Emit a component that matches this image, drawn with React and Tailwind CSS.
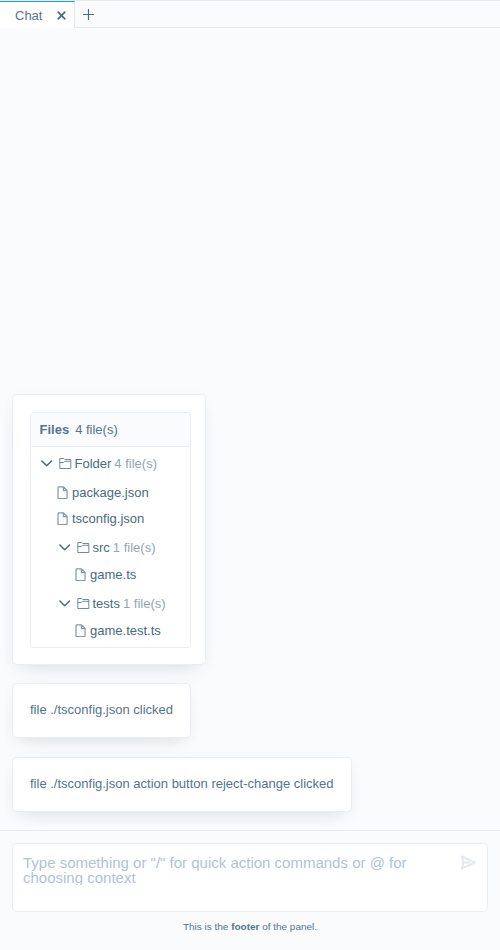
function Chevron() {
  return (
    <svg className="h-[14px] w-[12px] shrink-0" viewBox="0 0 12 14" fill="none" stroke="#4d6a80" strokeWidth="1.5" strokeLinecap="round" strokeLinejoin="round">
      <path d="M.9 4 5.7 8.8l4.8-4.8" />
    </svg>
  );
}

function FolderIcon() {
  return (
    <svg className="h-[14px] w-[13px] shrink-0" viewBox="0 0 13 14" fill="none" stroke="#6f8999" strokeWidth="1" strokeLinejoin="round">
      <path d="M.8 1.5h4l1 1h6v9h-11zM.8 5.5h3.8l1.2-1.2h6" />
    </svg>
  );
}

function FileIcon() {
  return (
    <svg className="h-[14px] w-[11px] shrink-0" viewBox="0 0 11 14" fill="none" stroke="#8298a7" strokeWidth="1.2" strokeLinejoin="round">
      <path d="M1.5.8h5l3.6 3.6v7.6l-.5.5H1.5L1 12V1.3zM6.4.8v3.8h3.7" />
    </svg>
  );
}

function Folder({ name, count, className }) {
  return (
    <div className={`flex h-7 items-center ${className}`}>
      <Chevron />
      <span className="ml-1.5 mr-[2.5px] flex"><FolderIcon /></span>
      <span>{name}</span>
      <span className="ml-[3px] text-[#93a5b1]">{count} file(s)</span>
    </div>
  );
}

function File({ name, className }) {
  return (
    <div className={`flex h-[26px] items-center gap-1 ${className}`}>
      <FileIcon />
      <span>{name}</span>
    </div>
  );
}

function Card({ children, className }) {
  return (
    <div className={`rounded-[5px] border border-[#e8eff4] bg-white shadow-[0_10px_20px_-10px_rgba(50,65,80,0.17),0_2px_14px_rgba(50,65,80,0.025)] ${className}`}>
      {children}
    </div>
  );
}

export default function App() {
  return (
    <div className="flex h-[950px] w-[500px] flex-col overflow-hidden bg-[#fafbfd] font-['Liberation_Sans',Arial,sans-serif] text-[13px] leading-[18px] text-[#53758b]">
      <header className="flex h-7 shrink-0 border-t border-[#e5ebef]">
        <div className="flex w-[75px] items-center border-r border-t border-r-[#e5ebef] border-t-[#2d9bc9] bg-white pl-[15px]">
          <span className="w-[41px] pt-0.5">Chat</span>
          <svg className="size-[11px]" viewBox="0 0 11 11" stroke="#476b81" strokeWidth="1.7" strokeLinecap="round">
            <path d="M2.2 2.2l6.6 6.6M8.8 2.2L2.2 8.8" />
          </svg>
        </div>
        <div className="flex flex-1 items-center border-b border-[#e5ebef] pl-2">
          <svg className="size-[11px]" viewBox="0 0 11 11" stroke="#476b81" strokeWidth="1.2" strokeLinecap="round">
            <path d="M5.5.5v10M.5 5.5h10" />
          </svg>
        </div>
      </header>

      <main className="flex min-h-0 flex-1 flex-col items-start justify-end px-3 pb-[18px]">
        <Card className="mb-[18px] h-[271px] w-[194px] p-[17px]">
          <div className="h-[236px] w-[161px] rounded-[3px] border border-[#e8eff4] text-[#476b81]">
            <div className="flex h-[34px] items-center gap-1.5 border-b border-[#e8eff4] bg-[#fafbfd] pl-[8.5px] text-[#53758b]">
              <b>Files</b>
              <span>4 file(s)</span>
            </div>
            <Folder name="Folder" count={4} className="mb-0.5 mt-[3px] pl-[10px]" />
            <File name="package.json" className="pl-[26px]" />
            <File name="tsconfig.json" className="pl-[26px]" />
            <Folder name="src" count={1} className="mt-0.5 pl-7" />
            <File name="game.ts" className="pl-11" />
            <Folder name="tests" count={1} className="mt-0.5 pl-7" />
            <File name="game.test.ts" className="pl-11" />
          </div>
        </Card>
        <Card className="mb-[19px] flex h-[55px] w-[179px] items-center pb-0.5 pl-[17px]">file ./tsconfig.json clicked</Card>
        <Card className="flex h-[55px] w-[340px] items-center pb-0.5 pl-[17px]">file ./tsconfig.json action button reject-change clicked</Card>
      </main>

      <footer className="h-[120px] shrink-0 border-t border-[#e5ebef] px-3 pt-3">
        <div className="flex h-[69px] justify-between rounded-[5px] border border-[#e8eff4] bg-white pl-[10px] pr-[11px] pt-[11px]">
          <div className="h-[30px] w-[400px] overflow-hidden text-[15px] leading-[15px] text-[#afc4d7]">
            Type something or "/" for quick action commands or @ for choosing context
          </div>
          <svg className="h-[16px] w-[16px]" viewBox="0 0 16 16" fill="none" stroke="#e3e9ee" strokeWidth="2" strokeLinejoin="round">
            <path d="M1.8 1.4 14.8 7.5 1.8 13.6 3.4 7.5zM3.4 7.5H10" />
          </svg>
        </div>
        <p className="mt-[6px] text-center text-[9.97px]">This is the <b>footer</b> of the panel.</p>
      </footer>
    </div>
  );
}
